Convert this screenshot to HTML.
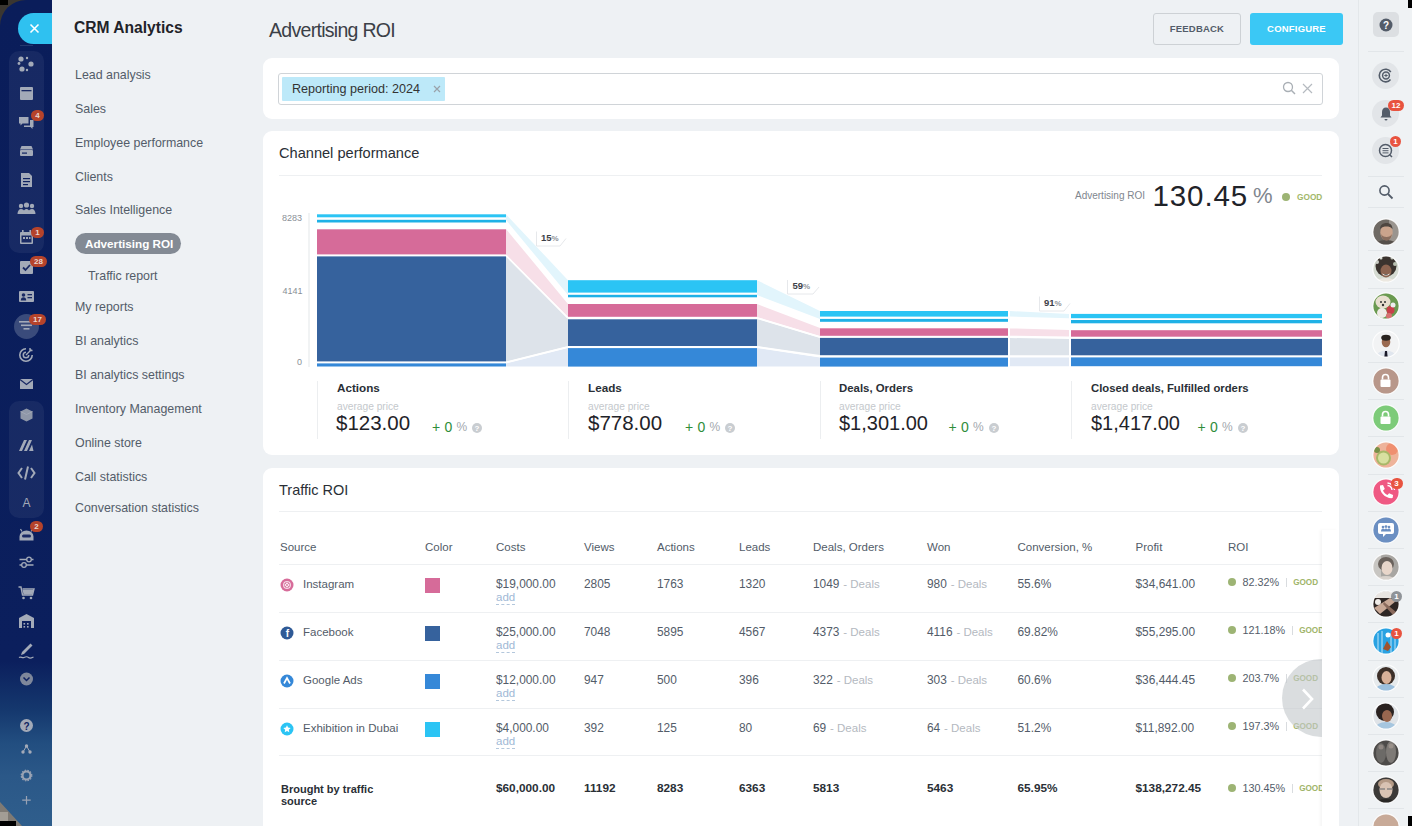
<!DOCTYPE html>
<html><head><meta charset="utf-8">
<style>
*{box-sizing:border-box;margin:0;padding:0}
html,body{width:1412px;height:826px;overflow:hidden}
body{background:#eef1f4;font-family:"Liberation Sans",sans-serif;position:relative;color:#333}
.a{position:absolute}
.t{position:absolute;white-space:nowrap;line-height:1}
/* left sidebar */
#lsb{left:0;top:0;width:52px;height:826px;clip-path:polygon(0 0,100% 0,100% 100%,22px 100%,0 802px);background:linear-gradient(180deg,#0a1d5a 0%,#0b1f5d 80%,#15386e 86%,#224e80 90%,#2b5888 94%,#2f5e8c 100%);border-radius:26px 0 0 0}
.grp{position:absolute;left:9px;width:35px;background:rgba(255,255,255,0.055);border-radius:10px}
.ic{position:absolute;left:18px;width:17px;height:17px}
.bdg{position:absolute;height:11px;min-width:13px;padding:0 3px;border-radius:6px;background:#b5432b;color:#e9d6d0;font-size:8px;font-weight:700;line-height:11px;text-align:center}
/* menu */
.mi{position:absolute;left:75px;font-size:12.4px;color:#535c69;white-space:nowrap;line-height:14px}
/* cards */
.card{position:absolute;left:263px;width:1076px;background:#fff;border-radius:9px}
.th{position:absolute;font-size:11.5px;color:#525c69;white-space:nowrap;line-height:14px}
.td{position:absolute;font-size:11.5px;color:#535c69;white-space:nowrap;line-height:14px}
.deal{color:#b4b9bf;margin-left:0.5px;font-size:11.5px}
.hl{position:absolute;left:279px;width:1043px;height:1px;background:#eef0f2}
.add{position:absolute;font-size:11.5px;color:#9fb9d6;line-height:13px;border-bottom:1px dashed #b3c7dc}
.sq{position:absolute;left:425px;width:15px;height:15px}
.roi{position:absolute;left:1228px;font-size:10.8px;color:#535c69;white-space:nowrap;line-height:14px}
.gd{position:absolute;width:8px;height:8px;border-radius:50%;background:#9db474}
.gtx{position:absolute;font-size:8.3px;font-weight:700;color:#a2b86a;line-height:10px}
.sep{position:absolute;width:1px;height:10px;background:#dfe2e5}
.sep2{display:inline-block;width:1px;height:9px;background:#d9dcdf;margin:0 6.5px 0 6.5px;vertical-align:-1px}
.gt2{font-size:8.2px;font-weight:700;color:#9fb56a;vertical-align:1px}
/* right sidebar */
#rsb{left:1358px;top:0;width:54px;height:826px;background:#eff2f4;border-left:1px solid #e3e7ea}
.rsep{position:absolute;left:1368px;width:36px;height:1px;background:#e2e6e9}
.av{position:absolute;left:1372px;width:27px;height:27px;border-radius:50%}
.rbdg{position:absolute;height:11px;min-width:11px;padding:0 2px;border-radius:6px;background:#e8533f;color:#fff;font-size:8px;font-weight:700;line-height:11px;text-align:center}
</style></head><body>

<!-- corners -->
<div class="a" style="left:0;top:0;width:30px;height:30px;background:#3a3631"></div><div class="a" style="left:0;top:0;width:8px;height:5px;background:#000"></div>
<div class="a" style="left:0;top:796px;width:30px;height:30px;background:#7f7a74"></div><div class="a" style="left:0;top:812px;width:8px;height:9px;background:#a39d95"></div><div class="a" style="left:0;top:821px;width:16px;height:5px;background:#000"></div>

<div id="lsb" class="a"></div>
<div class="grp" style="top:51px;height:202px"></div>
<div class="grp" style="top:401px;height:117px"></div>
<!-- close button -->
<div class="a" style="left:18px;top:13px;width:34px;height:31px;background:#2fc1f0;border-radius:16px 0 0 16px"></div>
<svg class="a" style="left:29px;top:23px" width="11" height="11" viewBox="0 0 11 11"><path d="M1.5 1.5L9.5 9.5M9.5 1.5L1.5 9.5" stroke="#fff" stroke-width="1.6"/></svg>
<div class="a" style="left:20px;top:45px;width:13px;height:1px;background:#25386e"></div>
<!-- selected funnel circle -->
<div class="a" style="left:14px;top:314px;width:25px;height:25px;border-radius:50%;background:#3a4b7b"></div>
<svg class="a" style="left:0;top:0" width="53" height="826" viewBox="0 0 53 826">
<g fill="#a3aab8" stroke="none">
 <!-- 64 sites -->
 <circle cx="21" cy="59" r="2.6"/><circle cx="31" cy="64" r="2.6"/><circle cx="22" cy="69" r="2.6"/><circle cx="19" cy="63.5" r="1.4"/><circle cx="27" cy="58" r="1.2"/><circle cx="27" cy="70" r="1.2"/>
 <!-- 93 window -->
 <rect x="20" y="87" width="13" height="13" rx="1"/><rect x="21.5" y="90" width="10" height="1.3" fill="#1a2a64"/>
 <!-- 122 chat -->
 <path d="M19 117h9.5v6.5h-6l-2 2v-2h-1.5z"/><path d="M30 120h3.5v7h-1v2l-2-2h-6.5v-1.5h6z"/>
 <!-- 151 inbox -->
 <path d="M21.5 146h10l1.5 3.5H20z"/><rect x="20" y="150" width="13" height="6" rx="1"/><rect x="22" y="152.5" width="5" height="1.2" fill="#0f2260"/>
 <!-- 180 doc -->
 <path d="M21 173h8l3 3v11H21z"/><rect x="23" y="178" width="7" height="1.2" fill="#0f2260"/><rect x="23" y="181" width="7" height="1.2" fill="#0f2260"/><rect x="23" y="184" width="5" height="1.2" fill="#0f2260"/>
 <!-- 209 people -->
 <circle cx="21" cy="206" r="2.2"/><circle cx="26.5" cy="205" r="2.6"/><circle cx="32" cy="206" r="2.2"/><path d="M17.5 214c0-3 1.5-5 3.5-5s3 1.5 3 1.5c.7-1 1.5-1.5 2.5-1.5s1.8.5 2.5 1.5c0 0 1-1.5 3-1.5s3.5 2 3.5 5z"/>
 <!-- 238 calendar -->
 <rect x="20" y="232" width="13" height="12" rx="1"/><rect x="22" y="230" width="1.6" height="3"/><rect x="29.4" y="230" width="1.6" height="3"/><rect x="21.5" y="235.5" width="10" height="7" fill="#1a2a64"/><rect x="23" y="237" width="2" height="2"/><rect x="26" y="237" width="2" height="2"/><rect x="29" y="237" width="1.5" height="2"/>
 <!-- 268 check -->
 <rect x="20" y="261" width="13" height="13" rx="1"/><path d="M23 267.5l2.5 2.5 4.5-5" stroke="#1a2a64" stroke-width="1.8" fill="none"/>
 <!-- 297 contact -->
 <rect x="19" y="291" width="15" height="11" rx="1"/><circle cx="23.5" cy="295" r="1.8" fill="#1a2a64"/><path d="M20.8 300.5c0-2 1.2-3.2 2.7-3.2s2.7 1.2 2.7 3.2z" fill="#1a2a64"/><rect x="27.5" y="294" width="4.5" height="1.3" fill="#1a2a64"/><rect x="27.5" y="297" width="4.5" height="1.3" fill="#1a2a64"/>
 <!-- 326 funnel -->
 <rect x="19" y="321" width="15" height="1.6"/><rect x="21" y="324.5" width="11" height="1.6"/><rect x="23.5" y="328" width="6" height="1.6"/>
 <!-- 355 target -->
 <path d="M26 348a7 7 0 1 0 7 7h-1.6a5.4 5.4 0 1 1 -5.4-5.4z"/><path d="M26 351.5a3.5 3.5 0 1 0 3.5 3.5h-1.5a2 2 0 1 1 -2-2z"/><path d="M26 355l5.5-5.5M30 348v2.5h2.5" stroke="#a3aab8" stroke-width="1.4" fill="none"/>
 <!-- 384 mail -->
 <rect x="20" y="379" width="13" height="10" rx="0.5"/><path d="M20 379.5l6.5 5 6.5-5" stroke="#1a2a64" stroke-width="1.3" fill="none"/>
 <!-- 414 cube -->
 <g transform="translate(0,1.5)"><path d="M26.5 407l6 3v7l-6 3-6-3v-7z" fill="#8f97a8"/><path d="M20.5 410l6 3 6-3" stroke="#a3aab8" stroke-width="0.8" fill="none"/></g>
 <!-- 443 M -->
 <path d="M19 451l5-11h3l-5 11z M24 451l5-11h3l-5 11z M29 451l3-6.5l1.5 6.5z"/>
 <!-- 472 code -->
 <path d="M22 468l-3.5 5 3.5 5M31 468l3.5 5-3.5 5M28 466.5l-3 13" stroke="#a3aab8" stroke-width="2" fill="none"/>
</g>
<text x="26.5" y="506.5" font-family="Liberation Sans" font-size="12" font-weight="400" fill="#a3aab8" text-anchor="middle">A</text>
<g fill="#a3aab8" stroke="none">
 <!-- 533 robot -->
 <g transform="translate(0,2.5)"><path d="M19.5 538v-4a7 6 0 0 1 14 0v4z"/><rect x="22" y="532" width="9" height="3" rx="1.5" fill="#1a2a64"/><path d="M22 529l-1.5-2.5M31 529l1.5-2.5" stroke="#a3aab8" stroke-width="1.2"/></g>
 <!-- 562 sliders -->
 <path d="M19.5 559.5h14M19.5 565h14" stroke="#a3aab8" stroke-width="1.4"/><circle cx="29" cy="559.5" r="2.3" fill="#0f2260" stroke="#a3aab8" stroke-width="1.3"/><circle cx="24" cy="565" r="2.3" fill="#0f2260" stroke="#a3aab8" stroke-width="1.3"/>
 <!-- 591 cart -->
 <g transform="translate(0,2)"><path d="M18.5 585h2.5l1.5 8h10l1.5-6h-11.5" stroke="#a3aab8" stroke-width="1.4" fill="none"/><path d="M22.5 588h11l-1 4.5h-9z"/><circle cx="23.5" cy="596" r="1.3"/><circle cx="31" cy="596" r="1.3"/></g>
 <!-- 620 warehouse -->
 <path d="M19 618l7.5-4 7.5 4v10H31v-7h-9v7h-3z"/><rect x="23.5" y="623" width="1.6" height="1.6"/><rect x="27" y="623" width="1.6" height="1.6"/><rect x="23.5" y="626" width="1.6" height="1.6"/><rect x="27" y="626" width="1.6" height="1.6"/>
 <!-- 649 sign -->
 <path d="M22 652l8.5-8.5 2 2-8.5 8.5-3 1z"/><path d="M19 657.5c2-1.5 3 1 5 0s3-1.5 4.5 0 3 0.5 5-0.5" stroke="#a3aab8" stroke-width="1.2" fill="none"/>
 <!-- 678 chevron circle -->
 <circle cx="26.5" cy="679" r="6.5" fill="#7e879b"/><path d="M23.5 677.5l3 3 3-3" stroke="#0f2260" stroke-width="1.5" fill="none"/>
 <!-- 725 question -->
 <circle cx="26.5" cy="725.5" r="6.5" fill="#a3aab8"/>
 <!-- 750 tree -->
 <circle cx="26.5" cy="746" r="1.7"/><circle cx="23" cy="752" r="1.7"/><circle cx="30" cy="752" r="1.7"/><path d="M26.5 746l-3.5 6M26.5 746l3.5 6" stroke="#a3aab8" stroke-width="1"/>
 <!-- 775 gear -->
 <circle cx="26.5" cy="775.5" r="4" fill="none" stroke="#9aa3b4" stroke-width="2.2"/><circle cx="26.5" cy="775.5" r="5.3" fill="none" stroke="#9aa3b4" stroke-width="1.2" stroke-dasharray="1.5 1.3"/>
 <!-- 800 plus -->
 <path d="M26.5 796v8.5M22.2 800.2h8.5" stroke="#9aa3b4" stroke-width="1.2"/>
</g>
<text x="26.5" y="729.5" font-family="Liberation Sans" font-size="10" font-weight="700" fill="#0f2260" text-anchor="middle">?</text>
</svg>
<div class="bdg" style="left:31px;top:110px">4</div>
<div class="bdg" style="left:31px;top:227px">1</div>
<div class="bdg" style="left:30px;top:256px;min-width:17px">28</div>
<div class="bdg" style="left:29px;top:314px;min-width:17px">17</div>
<div class="bdg" style="left:30px;top:521px">2</div>

<div class="t" style="left:74px;top:19.5px;font-size:15.6px;font-weight:700;color:#1f2329">CRM Analytics</div>
<div class="mi" style="top:68px">Lead analysis</div>
<div class="mi" style="top:102px">Sales</div>
<div class="mi" style="top:136px">Employee performance</div>
<div class="mi" style="top:170px">Clients</div>
<div class="mi" style="top:203.2px">Sales Intelligence</div>
<div class="a" style="left:75px;top:233px;width:106px;height:21px;border-radius:11px;background:#838a94"></div>
<div class="t" style="left:85px;top:238px;font-size:11.7px;font-weight:700;color:#fff">Advertising ROI</div>
<div class="mi" style="left:88px;top:268.5px">Traffic report</div>
<div class="mi" style="top:299.8px">My reports</div>
<div class="mi" style="top:333.8px">BI analytics</div>
<div class="mi" style="top:367.8px">BI analytics settings</div>
<div class="mi" style="top:402px">Inventory Management</div>
<div class="mi" style="top:435.8px">Online store</div>
<div class="mi" style="top:469.7px">Call statistics</div>
<div class="mi" style="top:501px">Conversation statistics</div>


<div class="t" style="left:269px;top:21px;font-size:19.5px;color:#3b4047;letter-spacing:-0.7px">Advertising ROI</div>
<div class="a" style="left:1153px;top:13px;width:88px;height:32px;border:1px solid #cdd1d5;border-radius:3px;background:#eef1f4"></div>
<div class="t" style="left:1153px;top:24px;width:88px;text-align:center;font-size:9.5px;font-weight:700;color:#535c69;letter-spacing:0.2px">FEEDBACK</div>
<div class="a" style="left:1250px;top:13px;width:93px;height:32px;border-radius:3px;background:#3bc8f5"></div>
<div class="t" style="left:1250px;top:24px;width:93px;text-align:center;font-size:9.5px;font-weight:700;color:#fff;letter-spacing:0.2px">CONFIGURE</div>
<!-- filter card -->
<div class="card" style="top:58px;height:61px"></div>
<div class="a" style="left:278px;top:73px;width:1045px;height:32px;border:1px solid #d0d4d8;border-radius:3px;background:#fff"></div>
<div class="a" style="left:282px;top:77px;width:163px;height:24px;background:#bde9f9;border-radius:1px"></div>
<div class="t" style="left:292px;top:83px;font-size:12.6px;color:#333">Reporting period: 2024</div>
<svg class="a" style="left:433px;top:85px" width="8" height="8" viewBox="0 0 8 8"><path d="M1 1L7 7M7 1L1 7" stroke="#9aa2aa" stroke-width="1.2"/></svg>
<svg class="a" style="left:1282px;top:81px" width="14" height="14" viewBox="0 0 14 14"><circle cx="6" cy="6" r="4.5" fill="none" stroke="#a9afb5" stroke-width="1.3"/><path d="M9.3 9.3L13 13" stroke="#a9afb5" stroke-width="1.5"/></svg>
<svg class="a" style="left:1302px;top:83px" width="11" height="11" viewBox="0 0 11 11"><path d="M1 1L10 10M10 1L1 10" stroke="#b5bac0" stroke-width="1.2"/></svg>

<!-- channel performance card -->
<div class="card" style="top:131px;height:324px"></div>
<div class="t" style="left:279px;top:146.3px;font-size:14.6px;color:#2a2f36">Channel performance</div>
<div class="hl" style="top:175px"></div>
<div class="t" style="left:1075px;top:191px;font-size:10px;color:#80868e">Advertising ROI</div>
<div class="t" style="left:1152.5px;top:180.7px;font-size:29.5px;color:#1f2329;letter-spacing:0.9px">130.45</div>
<div class="t" style="left:1253px;top:185px;font-size:22px;color:#80868e">%</div>
<div class="gd" style="left:1282px;top:193px"></div>
<div class="gtx" style="left:1297px;top:192px">GOOD</div>
<div class="t" style="left:282px;top:214px;font-size:9px;color:#8a9097">8283</div>
<div class="t" style="left:282.5px;top:286.6px;font-size:9px;color:#8a9097">4141</div>
<div class="t" style="left:297px;top:358px;font-size:9px;color:#8a9097">0</div>
<svg class="a" style="left:0;top:0" width="1412" height="400" viewBox="0 0 1412 400">
 <rect x="308.5" y="213" width="1" height="154" fill="#e4e7ea"/>
 <!-- connectors 1->2 -->
 <polygon points="506,214.3 568,280.2 568,295 506,220" fill="#e2f5fc"/>
 <polygon points="506,229 568,304 568,317 506,254.5" fill="#f7dfe8"/>
 <polygon points="506,256.5 568,319 568,346 506,361.5" fill="#dde3ea"/>
 <polygon points="506,363.5 568,348 568,366.5 506,366.5" fill="#e1e9f5"/>
 <!-- connectors 2->3 -->
 <polygon points="757,280.2 820,311 820,319 757,295" fill="#e2f5fc"/>
 <polygon points="757,304 820,328 820,336 757,317" fill="#f7dfe8"/>
 <polygon points="757,319 820,338 820,355 757,346" fill="#dde3ea"/>
 <polygon points="757,348 820,357.5 820,366.5 757,366.5" fill="#e1e9f5"/>
 <!-- connectors 3->4 -->
 <polygon points="1010,311 1069,313.9 1069,318.2 1010,316.6" fill="#e2f5fc"/>
 <polygon points="1010,328.4 1069,330 1069,336.5 1010,335.7" fill="#f7dfe8"/>
 <polygon points="1010,338 1069,339 1069,355.3 1010,355.3" fill="#dde3ea"/>
 <polygon points="1010,357.5 1069,357.5 1069,366.3 1010,366.3" fill="#e1e9f5"/>
 <!-- connector separators (white lines) -->
 <g stroke="#fff" stroke-width="1.6">
  <line x1="506" y1="255.5" x2="568" y2="318"/><line x1="506" y1="362.5" x2="568" y2="347"/>
  <line x1="757" y1="318" x2="820" y2="337"/><line x1="757" y1="347" x2="820" y2="356.5"/>
 </g>
 <!-- bar1 -->
 <g>
 <rect x="317" y="214.3" width="189" height="3" fill="#2bc4f4"/>
 <rect x="317" y="219.8" width="189" height="2.7" fill="#1fb1e6"/>
 <rect x="317" y="229.3" width="189" height="25.1" fill="#d66b99"/>
 <rect x="317" y="256.4" width="189" height="105" fill="#36629d"/>
 <rect x="317" y="363.4" width="189" height="3.1" fill="#3588d8"/>
 </g>
 <!-- bar2 -->
 <rect x="568" y="280.2" width="189" height="12.4" fill="#2bc4f4"/>
 <rect x="568" y="294.8" width="189" height="2.5" fill="#1fb1e6"/>
 <rect x="568" y="304" width="189" height="12.8" fill="#d66b99"/>
 <rect x="568" y="319.3" width="189" height="26.7" fill="#36629d"/>
 <rect x="568" y="348.1" width="189" height="18.5" fill="#3588d8"/>
 <!-- bar3 -->
 <rect x="820" y="311" width="188" height="5.6" fill="#2bc4f4"/>
 <rect x="820" y="318.9" width="188" height="2.9" fill="#1fb1e6"/>
 <rect x="820" y="328.3" width="188" height="7.5" fill="#d66b99"/>
 <rect x="820" y="337.9" width="188" height="17.3" fill="#36629d"/>
 <rect x="820" y="357.6" width="188" height="9" fill="#3588d8"/>
 <!-- bar4 -->
 <rect x="1071" y="313.9" width="251" height="4.3" fill="#2bc4f4"/>
 <rect x="1071" y="320" width="251" height="3.3" fill="#1fb1e6"/>
 <rect x="1071" y="330.2" width="251" height="6.5" fill="#d66b99"/>
 <rect x="1071" y="338.9" width="251" height="16.4" fill="#36629d"/>
 <rect x="1071" y="357.4" width="251" height="8.8" fill="#3588d8"/>
 <!-- labels -->
 <g>
  <path d="M536.5 231.5h24l5.5 0-6 7.5v7h-23.5z" fill="#fff"/>
  <path d="M536.5 231.5v14.5h23.5l6-7.5" fill="none" stroke="#e6e8eb" stroke-width="1"/>
  <path d="M787.5 280h26l5.5 0-6 7v7h-25.5z" fill="#fff"/>
  <path d="M787.5 280v14h25.5l6-7" fill="none" stroke="#e6e8eb" stroke-width="1"/>
  <path d="M1039.5 296.5h25l5.5 0-6 7v7.5h-24.5z" fill="#fff"/>
  <path d="M1039.5 296.5v14.5h24.5l6-7.5" fill="none" stroke="#e6e8eb" stroke-width="1"/>
 </g>
 <g font-family="Liberation Sans" font-weight="700" fill="#3d4148">
  <text x="541" y="241.2" font-size="9.5">15<tspan font-size="8" font-weight="700" fill="#8d9399">%</tspan></text>
  <text x="792.5" y="289.2" font-size="9.5">59<tspan font-size="8" font-weight="700" fill="#8d9399">%</tspan></text>
  <text x="1044" y="305.7" font-size="9.5">91<tspan font-size="8" font-weight="700" fill="#8d9399">%</tspan></text>
 </g>
</svg>
<!-- stats -->
<div class="a" style="left:317px;top:381px;width:1px;height:58px;background:#eceef0"></div>
<div class="a" style="left:568px;top:381px;width:1px;height:58px;background:#eceef0"></div>
<div class="a" style="left:820px;top:381px;width:1px;height:58px;background:#eceef0"></div>
<div class="a" style="left:1071px;top:381px;width:1px;height:58px;background:#eceef0"></div>
<div class="t" style="left:337px;top:382px;font-size:11.7px;font-weight:700;color:#2a2f36">Actions</div>
<div class="t" style="left:588px;top:382px;font-size:11.7px;font-weight:700;color:#2a2f36">Leads</div>
<div class="t" style="left:839px;top:382.6px;font-size:11.4px;font-weight:700;color:#2a2f36">Deals, Orders</div>
<div class="t" style="left:1091px;top:382.6px;font-size:11.3px;font-weight:700;color:#2a2f36">Closed deals, Fulfilled orders</div>
<div class="t" style="left:337px;top:402px;font-size:10.2px;color:#c4c8cc">average price</div>
<div class="t" style="left:588px;top:402px;font-size:10.2px;color:#c4c8cc">average price</div>
<div class="t" style="left:839px;top:402px;font-size:10.2px;color:#c4c8cc">average price</div>
<div class="t" style="left:1091px;top:402px;font-size:10.2px;color:#c4c8cc">average price</div>
<div class="t" style="left:336px;top:413px;font-size:20.5px;color:#1f2329">$123.00</div>
<div class="t" style="left:588px;top:413px;font-size:20.5px;color:#1f2329">$778.00</div>
<div class="t" style="left:839px;top:413px;font-size:20px;color:#1f2329">$1,301.00</div>
<div class="t" style="left:1091px;top:413px;font-size:20px;color:#1f2329">$1,417.00</div>

<!--T3S--><div class="t" style="left:432px;top:419.5px;font-size:14px;color:#2f8d3a">+</div>
<div class="t" style="left:444.5px;top:419.5px;font-size:14px;color:#2f8d3a">0</div>
<div class="t" style="left:456.5px;top:421px;font-size:12px;color:#a3a8ae">%</div>
<svg class="a" style="left:472px;top:423px" width="10" height="10" viewBox="0 0 10 10"><circle cx="5" cy="5" r="5" fill="#c9cdd1"/><text x="5" y="8.2" font-family="Liberation Sans" font-size="8" font-weight="700" fill="#fff" text-anchor="middle">?</text></svg>
<div class="t" style="left:685px;top:419.5px;font-size:14px;color:#2f8d3a">+</div>
<div class="t" style="left:697.5px;top:419.5px;font-size:14px;color:#2f8d3a">0</div>
<div class="t" style="left:709.5px;top:421px;font-size:12px;color:#a3a8ae">%</div>
<svg class="a" style="left:725px;top:423px" width="10" height="10" viewBox="0 0 10 10"><circle cx="5" cy="5" r="5" fill="#c9cdd1"/><text x="5" y="8.2" font-family="Liberation Sans" font-size="8" font-weight="700" fill="#fff" text-anchor="middle">?</text></svg>
<div class="t" style="left:948.5px;top:419.5px;font-size:14px;color:#2f8d3a">+</div>
<div class="t" style="left:961.0px;top:419.5px;font-size:14px;color:#2f8d3a">0</div>
<div class="t" style="left:973.0px;top:421px;font-size:12px;color:#a3a8ae">%</div>
<svg class="a" style="left:988.5px;top:423px" width="10" height="10" viewBox="0 0 10 10"><circle cx="5" cy="5" r="5" fill="#c9cdd1"/><text x="5" y="8.2" font-family="Liberation Sans" font-size="8" font-weight="700" fill="#fff" text-anchor="middle">?</text></svg>
<div class="t" style="left:1197.5px;top:419.5px;font-size:14px;color:#2f8d3a">+</div>
<div class="t" style="left:1210.0px;top:419.5px;font-size:14px;color:#2f8d3a">0</div>
<div class="t" style="left:1222.0px;top:421px;font-size:12px;color:#a3a8ae">%</div>
<svg class="a" style="left:1237.5px;top:423px" width="10" height="10" viewBox="0 0 10 10"><circle cx="5" cy="5" r="5" fill="#c9cdd1"/><text x="5" y="8.2" font-family="Liberation Sans" font-size="8" font-weight="700" fill="#fff" text-anchor="middle">?</text></svg>
<div class="card" style="top:468px;height:380px"></div>
<div class="t" style="left:279px;top:483px;font-size:14.5px;color:#2a2f36">Traffic ROI</div>
<div class="hl" style="top:511px"></div>
<div class="th" style="left:280px;top:540px">Source</div>
<div class="th" style="left:425px;top:540px">Color</div>
<div class="th" style="left:496px;top:540px">Costs</div>
<div class="th" style="left:584px;top:540px">Views</div>
<div class="th" style="left:657px;top:540px">Actions</div>
<div class="th" style="left:739px;top:540px">Leads</div>
<div class="th" style="left:813px;top:540px">Deals, Orders</div>
<div class="th" style="left:927px;top:540px">Won</div>
<div class="th" style="left:1017.5px;top:540px">Conversion, %</div>
<div class="th" style="left:1135.5px;top:540px">Profit</div>
<div class="th" style="left:1228px;top:540px">ROI</div>
<div class="hl" style="top:564px;width:1043px"></div>
<div class="hl" style="top:612px;width:1043px"></div>
<div class="hl" style="top:660px;width:1043px"></div>
<div class="hl" style="top:708px;width:1043px"></div>
<div class="hl" style="top:755px;width:1043px"></div>
<svg class="a" style="left:280px;top:577.5px" width="14" height="14" viewBox="0 0 14 14"><circle cx="7" cy="7" r="6.5" fill="#d76c9a"/><rect x="3.8" y="3.8" width="6.4" height="6.4" rx="2" fill="none" stroke="#fff" stroke-width="1"/><circle cx="7" cy="7" r="1.5" fill="none" stroke="#fff" stroke-width="1"/></svg>
<div class="td" style="left:303px;top:577.0px">Instagram</div>
<div class="sq" style="top:577.5px;background:#d66b99"></div>
<div class="td" style="left:496px;top:576.7px;font-size:11.9px">$19,000.00</div>
<div class="add" style="left:496px;top:590.5px">add</div>
<div class="td" style="left:584px;top:576.7px;font-size:11.9px">2805</div>
<div class="td" style="left:657px;top:576.7px;font-size:11.9px">1763</div>
<div class="td" style="left:739px;top:576.7px;font-size:11.9px">1320</div>
<div class="td" style="left:813px;top:576.7px;font-size:11.9px">1049 <span class="deal">-&nbsp;Deals</span></div>
<div class="td" style="left:927px;top:576.7px;font-size:11.9px">980 <span class="deal">-&nbsp;Deals</span></div>
<div class="td" style="left:1017.5px;top:576.7px;font-size:11.9px">55.6%</div>
<div class="td" style="left:1135.5px;top:576.7px;font-size:11.9px">$34,641.00</div>
<div class="gd" style="left:1227.5px;top:578.0px"></div>
<div class="roi" style="left:1242.5px;top:575.0px">82.32%<span class="sep2"></span><span class="gt2">GOOD</span></div>
<svg class="a" style="left:280px;top:625.5px" width="14" height="14" viewBox="0 0 14 14"><circle cx="7" cy="7" r="6.5" fill="#2f5a96"/><text x="7.3" y="11" font-family="Liberation Sans" font-size="10" font-weight="700" fill="#fff" text-anchor="middle">f</text></svg>
<div class="td" style="left:303px;top:625.0px">Facebook</div>
<div class="sq" style="top:625.5px;background:#36629d"></div>
<div class="td" style="left:496px;top:624.7px;font-size:11.9px">$25,000.00</div>
<div class="add" style="left:496px;top:638.5px">add</div>
<div class="td" style="left:584px;top:624.7px;font-size:11.9px">7048</div>
<div class="td" style="left:657px;top:624.7px;font-size:11.9px">5895</div>
<div class="td" style="left:739px;top:624.7px;font-size:11.9px">4567</div>
<div class="td" style="left:813px;top:624.7px;font-size:11.9px">4373 <span class="deal">-&nbsp;Deals</span></div>
<div class="td" style="left:927px;top:624.7px;font-size:11.9px">4116 <span class="deal">-&nbsp;Deals</span></div>
<div class="td" style="left:1017.5px;top:624.7px;font-size:11.9px">69.82%</div>
<div class="td" style="left:1135.5px;top:624.7px;font-size:11.9px">$55,295.00</div>
<div class="gd" style="left:1227.5px;top:626.0px"></div>
<div class="roi" style="left:1242.5px;top:623.0px">121.18%<span class="sep2"></span><span class="gt2">GOOD</span></div>
<svg class="a" style="left:280px;top:673.5px" width="14" height="14" viewBox="0 0 14 14"><circle cx="7" cy="7" r="6.5" fill="#3588d8"/><path d="M4 9.5L7 4l3 5.5" fill="none" stroke="#fff" stroke-width="1.7"/></svg>
<div class="td" style="left:303px;top:673.0px">Google Ads</div>
<div class="sq" style="top:673.5px;background:#3588d8"></div>
<div class="td" style="left:496px;top:672.7px;font-size:11.9px">$12,000.00</div>
<div class="add" style="left:496px;top:686.5px">add</div>
<div class="td" style="left:584px;top:672.7px;font-size:11.9px">947</div>
<div class="td" style="left:657px;top:672.7px;font-size:11.9px">500</div>
<div class="td" style="left:739px;top:672.7px;font-size:11.9px">396</div>
<div class="td" style="left:813px;top:672.7px;font-size:11.9px">322 <span class="deal">-&nbsp;Deals</span></div>
<div class="td" style="left:927px;top:672.7px;font-size:11.9px">303 <span class="deal">-&nbsp;Deals</span></div>
<div class="td" style="left:1017.5px;top:672.7px;font-size:11.9px">60.6%</div>
<div class="td" style="left:1135.5px;top:672.7px;font-size:11.9px">$36,444.45</div>
<div class="gd" style="left:1227.5px;top:674.0px"></div>
<div class="roi" style="left:1242.5px;top:671.0px">203.7%<span class="sep2"></span><span class="gt2">GOOD</span></div>
<svg class="a" style="left:280px;top:721.5px" width="14" height="14" viewBox="0 0 14 14"><circle cx="7" cy="7" r="6.5" fill="#2bc4f4"/><path d="M7 3.2l1.1 2.4 2.6.3-1.9 1.8.5 2.6L7 9l-2.3 1.3.5-2.6-1.9-1.8 2.6-.3z" fill="#fff"/></svg>
<div class="td" style="left:303px;top:721.0px">Exhibition in Dubai</div>
<div class="sq" style="top:721.5px;background:#2bc4f4"></div>
<div class="td" style="left:496px;top:720.7px;font-size:11.9px">$4,000.00</div>
<div class="add" style="left:496px;top:734.5px">add</div>
<div class="td" style="left:584px;top:720.7px;font-size:11.9px">392</div>
<div class="td" style="left:657px;top:720.7px;font-size:11.9px">125</div>
<div class="td" style="left:739px;top:720.7px;font-size:11.9px">80</div>
<div class="td" style="left:813px;top:720.7px;font-size:11.9px">69 <span class="deal">-&nbsp;Deals</span></div>
<div class="td" style="left:927px;top:720.7px;font-size:11.9px">64 <span class="deal">-&nbsp;Deals</span></div>
<div class="td" style="left:1017.5px;top:720.7px;font-size:11.9px">51.2%</div>
<div class="td" style="left:1135.5px;top:720.7px;font-size:11.9px">$11,892.00</div>
<div class="gd" style="left:1227.5px;top:722.0px"></div>
<div class="roi" style="left:1242.5px;top:719.0px">197.3%<span class="sep2"></span><span class="gt2">GOOD</span></div>
<div class="t" style="left:281px;top:783px;font-size:11px;font-weight:700;color:#2a2f36;line-height:12.3px;white-space:normal;width:110px">Brought by traffic source</div>
<div class="t" style="left:496px;top:782.5px;font-size:11.8px;font-weight:700;color:#2a2f36">$60,000.00</div>
<div class="t" style="left:584px;top:782.5px;font-size:11.8px;font-weight:700;color:#2a2f36">11192</div>
<div class="t" style="left:657px;top:782.5px;font-size:11.8px;font-weight:700;color:#2a2f36">8283</div>
<div class="t" style="left:739px;top:782.5px;font-size:11.8px;font-weight:700;color:#2a2f36">6363</div>
<div class="t" style="left:813px;top:782.5px;font-size:11.8px;font-weight:700;color:#2a2f36">5813</div>
<div class="t" style="left:927px;top:782.5px;font-size:11.8px;font-weight:700;color:#2a2f36">5463</div>
<div class="t" style="left:1017.5px;top:782.5px;font-size:11.8px;font-weight:700;color:#2a2f36">65.95%</div>
<div class="t" style="left:1135.5px;top:782.5px;font-size:11.8px;font-weight:700;color:#2a2f36">$138,272.45</div>
<div class="gd" style="left:1227.5px;top:783.5px"></div>
<div class="roi" style="left:1242.5px;top:781px">130.45%<span class="sep2"></span><span class="gt2">GOOD</span></div>
<div class="a" style="left:1322px;top:530px;width:16px;height:320px;background:#fff;box-shadow:-2px 0 3px rgba(0,0,0,0.04)"></div>
<div class="a" style="left:1282px;top:659px;width:40px;height:78px;overflow:hidden"><div style="width:78px;height:78px;border-radius:50%;background:rgba(196,200,204,0.62)"></div></div>
<svg class="a" style="left:1300px;top:688px" width="16" height="22" viewBox="0 0 16 22"><path d="M3 1.5l9 9.5-9 9.5" fill="none" stroke="#fff" stroke-width="2.6"/></svg><!--T3E-->
<!--RSBS--><div id="rsb" class="a"></div>
<div class="a" style="left:1373px;top:12px;width:26px;height:25px;border-radius:5px;background:#dcdfe2"></div>
<svg class="a" style="left:1378px;top:17px" width="16" height="16" viewBox="0 0 16 16"><circle cx="8" cy="8" r="6.5" fill="#535c69"/><text x="8" y="11.8" font-family="Liberation Sans" font-size="10" font-weight="700" fill="#fff" text-anchor="middle">?</text></svg>
<div class="rsep" style="top:50.5px"></div>
<div class="rsep" style="top:176px"></div>
<div class="rsep" style="top:206.5px"></div>
<div class="a" style="left:1372.1px;top:62.099999999999994px;width:27px;height:27px;border-radius:50%;background:#e2e5e8"></div>
<div class="a" style="left:1372.1px;top:100.2px;width:27px;height:27px;border-radius:50%;background:#e2e5e8"></div>
<div class="a" style="left:1372.1px;top:137.0px;width:27px;height:27px;border-radius:50%;background:#e2e5e8"></div>
<svg class="a" style="left:1377px;top:67px" width="17" height="17" viewBox="0 0 17 17"><path d="M13.5 12.5A6.3 6.3 0 1 1 13.8 5" fill="none" stroke="#535c69" stroke-width="1.6"/><circle cx="9" cy="8.5" r="3.4" fill="none" stroke="#535c69" stroke-width="1.5"/><path d="M9 6.8v3.4M7.3 8.5h3.4" stroke="#535c69" stroke-width="1"/></svg>
<svg class="a" style="left:1378px;top:105px" width="16" height="17" viewBox="0 0 16 17"><path d="M8 2.5c2.5 0 4 2 4 4.5v3.5l1.5 2H2.5l1.5-2V7c0-2.5 1.5-4.5 4-4.5z" fill="#535c69"/><path d="M6.5 14h3a1.5 1.5 0 0 1 -3 0z" fill="#535c69"/></svg>
<svg class="a" style="left:1377px;top:142px" width="17" height="17" viewBox="0 0 17 17"><circle cx="8.5" cy="8.5" r="6" fill="none" stroke="#535c69" stroke-width="1.5"/><path d="M12.5 12.5l2.5 2.5" stroke="#535c69" stroke-width="1.5"/><path d="M5.5 6.5h6M5.5 8.7h6M5.5 10.9h6" stroke="#535c69" stroke-width="1"/></svg>
<div class="rbdg" style="left:1388px;top:99.5px;min-width:16px">12</div>
<div class="rbdg" style="left:1390px;top:136px">1</div>
<svg class="a" style="left:1378px;top:184px" width="16" height="16" viewBox="0 0 16 16"><circle cx="6.5" cy="6.5" r="4.6" fill="none" stroke="#535c69" stroke-width="1.6"/><path d="M10 10l4.5 4.5" stroke="#535c69" stroke-width="1.8"/></svg>
<svg class="a" style="left:1371.9px;top:218.0px" width="28" height="28" viewBox="0 0 28 28"><clipPath id="c0"><circle cx="14" cy="14" r="13"/></clipPath><g clip-path="url(#c0)"><rect width="28" height="28" fill="#6f6a64"/><rect x="17" width="11" height="28" fill="#9a958f"/><ellipse cx="14" cy="28" rx="12" ry="6" fill="#56504b"/><ellipse cx="14.5" cy="14.5" rx="6.2" ry="7.8" fill="#caa48c"/><path d="M9 16c1 5 3 6.5 5.5 6.5s4.5-1.5 5.5-6.5c-1 2-3 3-5.5 3s-4.5-1-5.5-3z" fill="#8a6e5e"/><path d="M8 11c0-4 3-6 6.5-6s6 2 6 6c-1.5-2-4-2.5-6-2.5s-5 .5-6.5 2.5z" fill="#4e4640"/></g><circle cx="14" cy="14" r="13.2" fill="none" stroke="#fff" stroke-width="1.2" stroke-opacity="0.85"/></svg>
<div class="rsep" style="top:250.4px"></div>
<svg class="a" style="left:1371.9px;top:255.2px" width="28" height="28" viewBox="0 0 28 28"><clipPath id="c1"><circle cx="14" cy="14" r="13"/></clipPath><g clip-path="url(#c1)"><rect width="28" height="28" fill="#d5dbd2"/><circle cx="14" cy="11" r="10.5" fill="#3a332e"/><circle cx="5" cy="7" r="2" fill="#c8ccc4"/><circle cx="23" cy="9" r="2" fill="#b8c0b0"/><circle cx="9" cy="3" r="1.5" fill="#d8dcd4"/><circle cx="20" cy="3" r="1.5" fill="#c0c6bc"/><ellipse cx="14" cy="28" rx="10" ry="5" fill="#ece8e0"/><ellipse cx="14" cy="16" rx="5.5" ry="6.5" fill="#8c6450"/><path d="M10.5 19c1.5 1.5 5.5 1.5 7 0" stroke="#f0e8e0" stroke-width="1"/></g><circle cx="14" cy="14" r="13.2" fill="none" stroke="#fff" stroke-width="1.2" stroke-opacity="0.85"/></svg>
<div class="rsep" style="top:287.6px"></div>
<svg class="a" style="left:1371.9px;top:292.4px" width="28" height="28" viewBox="0 0 28 28"><clipPath id="c2"><circle cx="14" cy="14" r="13"/></clipPath><g clip-path="url(#c2)"><rect width="28" height="28" fill="#6a9a50"/><ellipse cx="11" cy="10" rx="7.5" ry="6.5" fill="#e8dfcf"/><circle cx="9" cy="10" r="1" fill="#333"/><circle cx="13" cy="10" r="1" fill="#333"/><circle cx="11" cy="13" r="1.2" fill="#333"/><circle cx="10" cy="21" r="5" fill="#f0ebe6"/><circle cx="18.5" cy="18" r="4" fill="#c8404a"/><circle cx="21" cy="13" r="2.5" fill="#eeeeee"/><circle cx="17" cy="24" r="3" fill="#d87070"/></g><circle cx="14" cy="14" r="13.2" fill="none" stroke="#fff" stroke-width="1.2" stroke-opacity="0.85"/></svg>
<div class="rsep" style="top:324.8px"></div>
<svg class="a" style="left:1371.9px;top:329.6px" width="28" height="28" viewBox="0 0 28 28"><clipPath id="c3"><circle cx="14" cy="14" r="13"/></clipPath><g clip-path="url(#c3)"><rect width="28" height="28" fill="#f2f3f4"/><ellipse cx="14" cy="27.5" rx="10" ry="7" fill="#e0e6ee"/><path d="M13 21h2l.7 6h-3.4z" fill="#1a1a2a"/><ellipse cx="14" cy="12" rx="4.3" ry="5.2" fill="#9a6a50"/><ellipse cx="14" cy="7.8" rx="4.8" ry="3" fill="#2a2420"/></g><circle cx="14" cy="14" r="13.2" fill="none" stroke="#fff" stroke-width="1.2" stroke-opacity="0.85"/></svg>
<div class="rsep" style="top:362.0px"></div>
<svg class="a" style="left:1371.9px;top:366.8px" width="28" height="28" viewBox="0 0 28 28"><clipPath id="c4"><circle cx="14" cy="14" r="13"/></clipPath><g clip-path="url(#c4)"><rect width="28" height="28" fill="#b8978a"/></g><circle cx="14" cy="14" r="13.2" fill="none" stroke="#fff" stroke-width="1.2" stroke-opacity="0.85"/></svg>
<div class="rsep" style="top:399.2px"></div>
<svg class="a" style="left:1371.9px;top:404.0px" width="28" height="28" viewBox="0 0 28 28"><clipPath id="c5"><circle cx="14" cy="14" r="13"/></clipPath><g clip-path="url(#c5)"><rect width="28" height="28" fill="#7dcb79"/></g><circle cx="14" cy="14" r="13.2" fill="none" stroke="#fff" stroke-width="1.2" stroke-opacity="0.85"/></svg>
<div class="rsep" style="top:436.4px"></div>
<svg class="a" style="left:1371.9px;top:441.20000000000005px" width="28" height="28" viewBox="0 0 28 28"><clipPath id="c6"><circle cx="14" cy="14" r="13"/></clipPath><g clip-path="url(#c6)"><rect width="28" height="28" fill="#eeb39a"/><circle cx="20" cy="8" r="6" fill="#ef8f70"/><circle cx="11.5" cy="17" r="7.5" fill="#a8b868"/><circle cx="11.5" cy="17" r="5.5" fill="#d8e0a0"/><circle cx="5" cy="9" r="3" fill="#789048"/></g><circle cx="14" cy="14" r="13.2" fill="none" stroke="#fff" stroke-width="1.2" stroke-opacity="0.85"/></svg>
<div class="rsep" style="top:473.6px"></div>
<svg class="a" style="left:1371.9px;top:478.40000000000003px" width="28" height="28" viewBox="0 0 28 28"><clipPath id="c7"><circle cx="14" cy="14" r="13"/></clipPath><g clip-path="url(#c7)"><rect width="28" height="28" fill="#ef5983"/></g><circle cx="14" cy="14" r="13.2" fill="none" stroke="#fff" stroke-width="1.2" stroke-opacity="0.85"/></svg>
<div class="rsep" style="top:510.8px"></div>
<svg class="a" style="left:1371.9px;top:515.6px" width="28" height="28" viewBox="0 0 28 28"><clipPath id="c8"><circle cx="14" cy="14" r="13"/></clipPath><g clip-path="url(#c8)"><rect width="28" height="28" fill="#6b8fc2"/></g><circle cx="14" cy="14" r="13.2" fill="none" stroke="#fff" stroke-width="1.2" stroke-opacity="0.85"/></svg>
<div class="rsep" style="top:548.0px"></div>
<svg class="a" style="left:1371.9px;top:552.8px" width="28" height="28" viewBox="0 0 28 28"><clipPath id="c9"><circle cx="14" cy="14" r="13"/></clipPath><g clip-path="url(#c9)"><rect width="28" height="28" fill="#a8a6a2"/><rect x="0" y="0" width="9" height="28" fill="#c8c6c2"/><ellipse cx="14" cy="11" rx="8" ry="7" fill="#6a625c"/><ellipse cx="15" cy="15" rx="5.5" ry="7" fill="#e8d6ca"/><ellipse cx="14" cy="28" rx="10" ry="5" fill="#d8d2cc"/></g><circle cx="14" cy="14" r="13.2" fill="none" stroke="#fff" stroke-width="1.2" stroke-opacity="0.85"/></svg>
<div class="rsep" style="top:585.2px"></div>
<svg class="a" style="left:1371.9px;top:590.0px" width="28" height="28" viewBox="0 0 28 28"><clipPath id="c10"><circle cx="14" cy="14" r="13"/></clipPath><g clip-path="url(#c10)"><rect width="28" height="28" fill="#2e2624"/><rect y="0" width="28" height="8" fill="#e8e4e0"/><path d="M2 18L18 8l6 3L8 24z" fill="#c8a896"/><path d="M12 12l12 10-3 3-10-11z" fill="#8a6a5c"/><circle cx="6" cy="12" r="3" fill="#f0ece8"/></g><circle cx="14" cy="14" r="13.2" fill="none" stroke="#fff" stroke-width="1.2" stroke-opacity="0.85"/></svg>
<div class="rsep" style="top:622.4px"></div>
<svg class="a" style="left:1371.9px;top:627.2px" width="28" height="28" viewBox="0 0 28 28"><clipPath id="c11"><circle cx="14" cy="14" r="13"/></clipPath><g clip-path="url(#c11)"><rect width="28" height="28" fill="#29a2e2"/><path d="M6 6v20M10 4v22M19 6v20M23 8v18" stroke="#bfe4f7" stroke-width="1"/><circle cx="16" cy="8" r="2.5" fill="#fff"/><path d="M11 22l4-8 4 6-3 4z" fill="#a0522d"/></g><circle cx="14" cy="14" r="13.2" fill="none" stroke="#fff" stroke-width="1.2" stroke-opacity="0.85"/></svg>
<div class="rsep" style="top:659.6px"></div>
<svg class="a" style="left:1371.9px;top:664.4000000000001px" width="28" height="28" viewBox="0 0 28 28"><clipPath id="c12"><circle cx="14" cy="14" r="13"/></clipPath><g clip-path="url(#c12)"><rect width="28" height="28" fill="#e6eaec"/><circle cx="14" cy="12" r="9" fill="#3d3029"/><ellipse cx="14" cy="27" rx="11" ry="7" fill="#9cc0de"/><ellipse cx="14.5" cy="13.5" rx="5" ry="6.5" fill="#d9b199"/></g><circle cx="14" cy="14" r="13.2" fill="none" stroke="#fff" stroke-width="1.2" stroke-opacity="0.85"/></svg>
<div class="rsep" style="top:696.8px"></div>
<svg class="a" style="left:1371.9px;top:701.6px" width="28" height="28" viewBox="0 0 28 28"><clipPath id="c13"><circle cx="14" cy="14" r="13"/></clipPath><g clip-path="url(#c13)"><rect width="28" height="28" fill="#dfe3e7"/><circle cx="13" cy="10" r="9" fill="#2a2220"/><ellipse cx="14" cy="27" rx="11" ry="7" fill="#a6c6df"/><ellipse cx="15" cy="14" rx="5" ry="6" fill="#99674f"/></g><circle cx="14" cy="14" r="13.2" fill="none" stroke="#fff" stroke-width="1.2" stroke-opacity="0.85"/></svg>
<div class="rsep" style="top:734.0px"></div>
<svg class="a" style="left:1371.9px;top:738.8000000000001px" width="28" height="28" viewBox="0 0 28 28"><clipPath id="c14"><circle cx="14" cy="14" r="13"/></clipPath><g clip-path="url(#c14)"><rect width="28" height="28" fill="#4d4b49"/><ellipse cx="9" cy="14" rx="5" ry="10" fill="#6c6a67"/><ellipse cx="19" cy="13" rx="5" ry="11" fill="#7e7a76"/><circle cx="9" cy="8" r="2.5" fill="#8f8782"/><circle cx="19" cy="7" r="2.5" fill="#9a918a"/></g><circle cx="14" cy="14" r="13.2" fill="none" stroke="#fff" stroke-width="1.2" stroke-opacity="0.85"/></svg>
<div class="rsep" style="top:771.2px"></div>
<svg class="a" style="left:1371.9px;top:776.0px" width="28" height="28" viewBox="0 0 28 28"><clipPath id="c15"><circle cx="14" cy="14" r="13"/></clipPath><g clip-path="url(#c15)"><rect width="28" height="28" fill="#3c3a38"/><ellipse cx="14" cy="8" rx="8" ry="5" fill="#b49a86"/><ellipse cx="14" cy="14" rx="6.5" ry="8" fill="#d9c3b3"/><path d="M7.5 13h5.5M15 13h5.5" stroke="#8a8684" stroke-width="1.3"/><ellipse cx="14" cy="28" rx="11" ry="5" fill="#2a2826"/></g><circle cx="14" cy="14" r="13.2" fill="none" stroke="#fff" stroke-width="1.2" stroke-opacity="0.85"/></svg>
<div class="rsep" style="top:808.4px"></div>
<svg class="a" style="left:1371.9px;top:813.2px" width="28" height="28" viewBox="0 0 28 28"><clipPath id="c16"><circle cx="14" cy="14" r="13"/></clipPath><g clip-path="url(#c16)"><rect width="28" height="28" fill="#c8aa98"/><rect x="8" y="14" width="12" height="10" fill="#f4f0ee"/></g><circle cx="14" cy="14" r="13.2" fill="none" stroke="#fff" stroke-width="1.2" stroke-opacity="0.85"/></svg>
<svg class="a" style="left:1379px;top:372.8px" width="13" height="15" viewBox="0 0 13 15"><path d="M3.5 6.5V4.5a3 3 0 0 1 6 0v2" fill="none" stroke="#fff" stroke-width="1.6"/><rect x="1.5" y="6.5" width="10" height="7.5" rx="1" fill="#fff"/></svg>
<svg class="a" style="left:1379px;top:410px" width="13" height="15" viewBox="0 0 13 15"><path d="M3.5 6.5V4.5a3 3 0 0 1 6 0v2" fill="none" stroke="#fff" stroke-width="1.6"/><rect x="1.5" y="6.5" width="10" height="7.5" rx="1" fill="#fff"/></svg>
<svg class="a" style="left:1376px;top:482px" width="20" height="20" viewBox="0 0 20 20"><path d="M4 3.5l3-.5 1.8 4-1.8 1.6c.9 2 2.5 3.6 4.5 4.5l1.6-1.8 4 1.8-.5 3C9.5 16.8 3.2 10.5 4 3.5z" fill="#fff"/><path d="M11.5 3.5a5 5 0 0 1 4.5 4.5M11.5 1a7.5 7.5 0 0 1 7 7" fill="none" stroke="#fff" stroke-width="1.3"/></svg>
<svg class="a" style="left:1376px;top:520px" width="20" height="19" viewBox="0 0 20 19"><path d="M4 3h12a2 2 0 0 1 2 2v7a2 2 0 0 1-2 2H10l-3 3v-3H4a2 2 0 0 1-2-2V5a2 2 0 0 1 2-2z" fill="#fff"/><g fill="#6b8fc2"><circle cx="7" cy="7" r="1.3"/><circle cx="10" cy="6.6" r="1.4"/><circle cx="13" cy="7" r="1.3"/><path d="M5 11.5c0-2 .9-3 2-3s2 1 2 3zM8 11.5c0-2 .9-3 2-3s2 1 2 3zM11 11.5c0-2 .9-3 2-3s2 1 2 3z"/></g></svg>
<div class="rbdg" style="left:1390.5px;top:478px;min-width:12px">3</div>
<div class="rbdg" style="left:1391px;top:590.5px;background:#8f9398">1</div>
<div class="rbdg" style="left:1391px;top:628px">1</div><!--RSBE-->
<!--MAIN5-->
<div class="a" style="left:1408px;top:0;width:4px;height:8px;background:#000"></div>
<div class="a" style="left:1408px;top:816px;width:4px;height:10px;background:#000"></div>
</body></html>
